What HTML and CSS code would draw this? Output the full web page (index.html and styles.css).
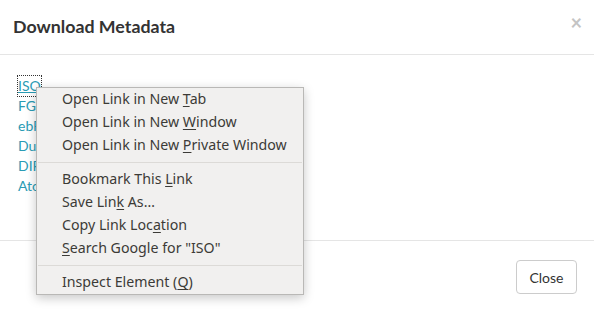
FILE: index.html
```html
<!DOCTYPE html>
<html>
<head>
<meta charset="utf-8">
<link rel="stylesheet" href="styles.css">
</head>
<body>
<div class="modal">
  <div class="modal-header">
    <h4 class="title">Download Metadata</h4>
    <span class="close-x">×</span>
  </div>
  <div class="modal-body">
    <a class="link focused" href="#">ISO</a>
    <a class="link" href="#">FGDC</a>
    <a class="link" href="#">ebRIM</a>
    <a class="link" href="#">Dublin Core</a>
    <a class="link" href="#">DIF</a>
    <a class="link" href="#">Atom</a>
  </div>
  <div class="modal-footer">
    <button class="btn">Close</button>
  </div>
</div>
<div class="menu">
  <div class="item">Open Link in New <u>T</u>ab</div>
  <div class="item">Open Link in New <u>W</u>indow</div>
  <div class="item">Open Link in New <u>P</u>rivate Window</div>
  <div class="sep"></div>
  <div class="item">Bookmark This <u>L</u>ink</div>
  <div class="item">Save Lin<u>k</u> As…</div>
  <div class="item">Copy Link Loc<u>a</u>tion</div>
  <div class="item"><u>S</u>earch Google for "ISO"</div>
  <div class="sep"></div>
  <div class="item">Inspect Element (<u>Q</u>)</div>
</div>
</body>
</html>
```
FILE: styles.css
```css
html, body {
  margin: 0;
  padding: 0;
  background: #fff;
  width: 594px;
  height: 314px;
  overflow: hidden;
}
.modal {
  display: flex;
  flex-direction: column;
  height: 314px;
  font-family: Lato, "Liberation Sans", sans-serif;
}
.modal-header {
  height: 54px;
  border-bottom: 1px solid #e5e5e5;
  display: flex;
  align-items: center;
  justify-content: space-between;
  padding: 0 13px;
}
.title {
  margin: 0;
  font-size: 17.8px;
  font-weight: bold;
  color: #333;
  position: relative;
  top: -1px;
}
.close-x {
  font-size: 20px;
  color: #c4c4c4;
  font-weight: bold;
  position: relative;
  top: -5px;
  right: -1px;
}
.modal-body {
  height: 186px;
  border-bottom: 1px solid #e5e5e5;
  padding: 21px 0 0 18px;
  box-sizing: border-box;
  display: flex;
  flex-direction: column;
}
.link {
  font-size: 14px;
  line-height: 20px;
  color: #2a9bb4;
  text-decoration: none;
}
.link.focused {
  align-self: flex-start;
  text-decoration: underline;
  outline: 1px dotted #333;
}
.modal-footer {
  flex: 1;
  display: flex;
  justify-content: flex-end;
  align-items: flex-start;
  padding: 19px 17px 0 0;
}
.btn {
  font-family: Lato, "Liberation Sans", sans-serif;
  font-size: 14px;
  color: #333;
  background: #fff;
  border: 1px solid #ccc;
  border-radius: 4px;
  width: 61px;
  height: 34px;
  padding: 0;
}
.menu {
  position: absolute;
  left: 36px;
  top: 87px;
  width: 266px;
  background: #f1f0ef;
  border: 1px solid #b9b8b6;
  box-shadow: 0 3px 10px rgba(0,0,0,0.22);
  font-family: "Noto Sans", "DejaVu Sans", sans-serif;
  font-size: 14.2px;
  color: #3c3b37;
}
.item {
  height: 23px;
  line-height: 22px;
  padding-left: 25px;
  white-space: nowrap;
}
.item u {
  text-underline-offset: 2px;
}
.sep {
  height: 1px;
  background: #dcdad7;
  margin: 5px 1px 5px 1px;
}
```
